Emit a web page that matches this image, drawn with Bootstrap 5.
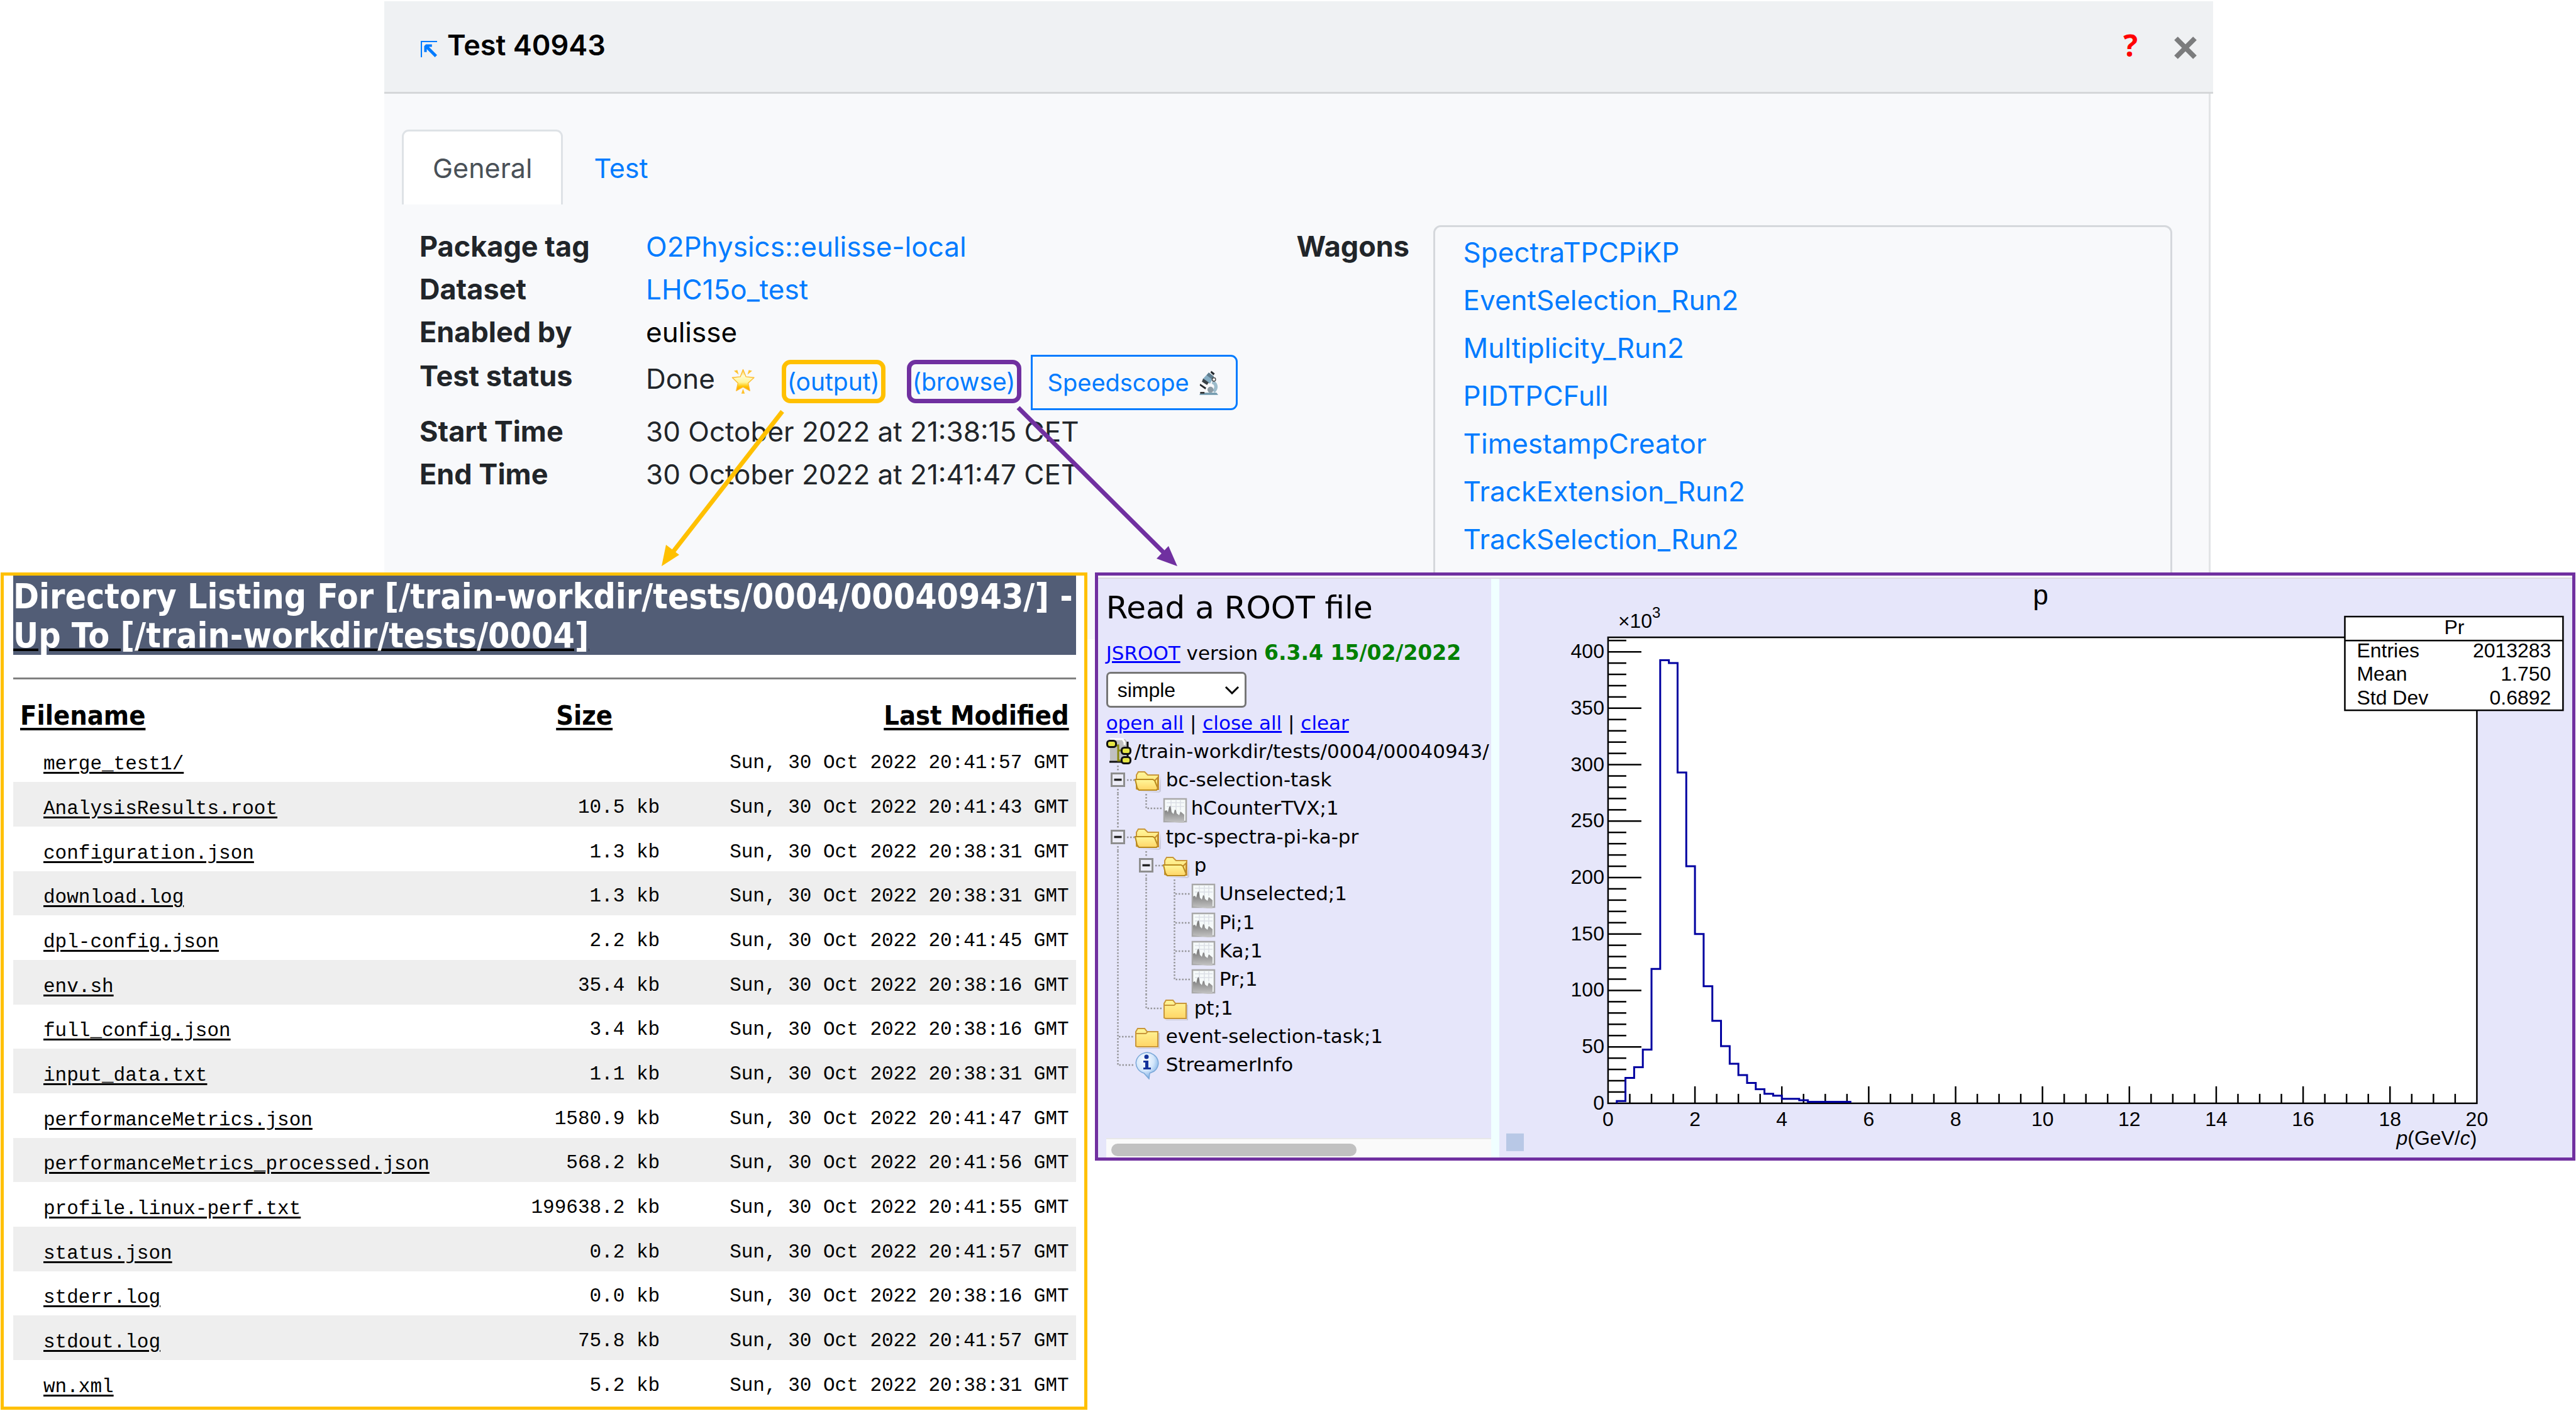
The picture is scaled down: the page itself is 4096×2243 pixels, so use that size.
<!DOCTYPE html>
<html lang="en">
<head>
<meta charset="utf-8">
<meta name="viewport" content="width=device-width, initial-scale=1">
<title>Test 40943</title>
<link href="https://cdn.jsdelivr.net/npm/bootstrap@5.3.0/dist/css/bootstrap.min.css" rel="stylesheet">
<style>
body{font-family:Inter,"Liberation Sans",sans-serif;font-size:44px;line-height:68px;color:#212529;background:#fff;overflow-x:hidden}
a{text-decoration:none}
/* test details sheet */
.sheet{width:71%;margin:2px 0 0 611px}
.sheet-head{background:#eff1f3;border-bottom:3px solid #d5d7d9;height:147px;padding:0 26px 0 58px}
.sheet-title{font-size:45px;line-height:68px;font-weight:600;color:#000;margin:0;padding-bottom:4px}
.pop-link svg{width:26px;height:26px;display:block;margin-top:8px}
.help-mark{font:700 48px/64px "Open Sans",sans-serif;color:#f00;padding-bottom:4px}
.close-x{border:0;background:none;padding:4px 0 0;line-height:0}
.sheet-body{background:#f8f9fb;border-right:3px solid #e2e4e6;margin-right:4px;padding:57px 0 58px}
.nav-tabs{border:0;margin:0 0 33px 28px}
.nav-tabs .nav-link{font-size:43px;border-width:3px;border-radius:11px 11px 0 0;padding:24px 46px 21px;margin:0;color:#007bff;height:119px}
.nav-tabs .nav-link.active{color:#495057;border-bottom:0;background:#fff}
.facts{padding-left:56px}
.fact-row dt{width:360px;font-size:45px;font-weight:700}
.fact-row a,.wagon-box a{color:#007bff}
.status-row{height:90px;padding-top:2px}
.status-text{padding-top:4px;margin-right:26px}
.fact-row .pill-link{font-size:39px;line-height:55px;border:7px solid #ffc000;border-radius:14px;padding:0 2px;margin-top:8px}
.fact-row .pill-browse{border-color:#7030a0;margin:8px 15px 0 34px}
.btn-scope{font-size:38px;line-height:60px;border:3px solid #007bff;border-radius:0 11px 11px 0;padding:0 28px 0 24px;height:88px;color:#007bff;gap:16px}
.star-icon{width:37px;height:40px;margin:22px 43px 0 0}
.wagon-label{width:217px;font-size:45px;font-weight:700}
.wagon-box{border:3px solid #d5d8dc;border-radius:12px;padding:2px 45px 60px;margin-right:58px;line-height:76px}
.arrows{left:0;top:0;pointer-events:none}
/* result panels */
.panels{margin-top:-106px;padding:0 1px;gap:12px;z-index:1}
.list-panel{border:5px solid #ffc000;background:#fff;padding:0 13px 3px 15px;width:42.2%;font-family:"DejaVu Sans Condensed","DejaVu Sans",sans-serif}
.list-title{background:#525d76;color:#fff;font-size:55px;line-height:62px;font-weight:700;margin:0;padding:2px 0 0}
.list-title a{color:#fff;text-decoration:underline;text-decoration-color:#000;text-decoration-thickness:4px}
.list-rule{border-top:3px solid #808080;opacity:1;margin:36px 0 0}
.files{table-layout:fixed;color:#000}
.files th{font-size:43px;line-height:52px;height:93px;padding:0 11px 10px;vertical-align:bottom}
.files th span{text-decoration:underline;text-decoration-thickness:4px;text-underline-offset:5px;text-decoration-skip-ink:none}
.files td{font:31px/40px "Liberation Mono",monospace;height:71px;padding:10px 11px 0;text-align:right;white-space:pre;vertical-align:middle}
.files tbody tr:nth-child(3n+1) td{height:70px}
.files tbody tr:nth-child(even) td{background:#eee}
.files tbody td:first-child{padding:14px 11px 0 48px;text-align:left}
.files a{color:#000;text-decoration:underline;text-decoration-thickness:3px;text-underline-offset:4px}
.root-panel{border:5px solid #7030a0;background:#e6e6fa;height:935px;color:#000;min-width:0;font-family:"DejaVu Sans",sans-serif}
.root-strip{height:5px;background:#fff;border-bottom:2px solid #d9dade}
.side{width:625px;flex:none;font-size:31px;line-height:45px}
.side-in{padding:11px 0 0 13px;overflow:hidden}
.side h2{font-size:50px;line-height:70px;font-weight:400;margin:0 0 14px}
.side .lk{color:#00f;text-decoration:underline;text-decoration-thickness:3px}
.version-no{color:green;font-size:33px;line-height:45px;font-weight:700}
.version-row{height:45px}
.mode-pick{width:223px;height:57px;border:3px solid #767676;border-radius:7px;font:32px/40px "Liberation Sans",sans-serif;color:#000;padding:0 15px;margin:8px 0 2px;background:#fff url("data:image/svg+xml,%3Csvg xmlns='http://www.w3.org/2000/svg' viewBox='0 0 24 14'%3E%3Cpath d='M2 2l10 10L22 2' fill='none' stroke='%23000' stroke-width='3'/%3E%3C/svg%3E") no-repeat right 8px center/24px 14px}
.tree{list-style:none;padding:0;margin:0}
.tree li{height:45px;white-space:nowrap}
.tree li:nth-child(3n){height:46px}
.tree svg{width:45px;height:46px;flex:none;overflow:visible}
.tree a{color:#000}
.tree .branch{padding-left:5px}
.splitter{width:13px;background:azure;flex:none}
.hbar{background:#fafafa;border-top:2px solid #e8e8e8;height:31px;margin-left:13px;padding:7px 8px 0}
.hbar div{height:20px;width:390px;border-radius:10px;background:#c1c1c1}
.plot{min-width:0}
.plot svg{width:100%;height:100%;display:block}
.plot text{font-family:"Liberation Sans",sans-serif;font-size:32px}
.plot .plot-title{font-size:44px}
.plot .plot-exp{font-size:24px}
</style>
</head>
<body>
<svg width="0" height="0" class="position-absolute" aria-hidden="true">
  <defs>
    <linearGradient id="gStar" x1="0" y1="0" x2="0" y2="1"><stop offset="0" stop-color="#ffc838"/><stop offset=".3" stop-color="#fffbd0"/><stop offset=".6" stop-color="#fff69a"/><stop offset=".8" stop-color="#ffc400"/><stop offset="1" stop-color="#ff9800"/></linearGradient>
    <linearGradient id="gFold" x1="0" y1="0" x2="0" y2="1"><stop offset="0" stop-color="#fff79a"/><stop offset="1" stop-color="#ffd566"/></linearGradient>
    <linearGradient id="gHist" x1="0" y1="0" x2="0" y2="1"><stop offset="0" stop-color="#6e6e6e"/><stop offset="1" stop-color="#c8c8c8"/></linearGradient>
    <radialGradient id="gInfo" cx=".4" cy=".3" r=".8"><stop offset="0" stop-color="#fff"/><stop offset=".5" stop-color="#d3e6fb"/><stop offset="1" stop-color="#5c9bdc"/></radialGradient>
    <symbol id="t-line" viewBox="0 0 45 46"><path d="M18.500 0V46" stroke="#97979b" stroke-width="2.500" stroke-dasharray="2.500 2.500"/></symbol>
    <symbol id="t-join" viewBox="0 0 45 46"><path d="M18.500 0V46M20 23H45" stroke="#97979b" stroke-width="2.500" stroke-dasharray="2.500 2.500"/></symbol>
    <symbol id="t-end" viewBox="0 0 45 46"><path d="M18.500 0V23H45" fill="none" stroke="#97979b" stroke-width="2.500" stroke-dasharray="2.500 2.500"/></symbol>
    <symbol id="t-minus" viewBox="0 0 45 46"><path d="M18.500 0V10M18.500 37V46M33 23H45" stroke="#97979b" stroke-width="2.500" stroke-dasharray="2.500 2.500"/><rect x="8.500" y="12.500" width="20" height="20" fill="#ececf6" stroke="#8e8e8e" stroke-width="3"/><path d="M12.500 22.500h12" stroke="#222" stroke-width="3.500"/></symbol>
    <symbol id="i-open" viewBox="0 0 45 46"><path d="M5 41h34l3-26v26l-3 2z" fill="#b9b9c8" opacity=".6"/><path d="M3 37V15l3-5h10l5 5h17v23H6z" fill="url(#gFold)" stroke="#c8963a" stroke-width="2"/><path d="M1 22h28l3 2 5 12-2 3H7l-3-4z" fill="url(#gFold)" stroke="#b98a1c" stroke-width="2"/><path d="M32 24l5-5v19" fill="none" stroke="#c08a2c" stroke-width="2"/></symbol>
    <symbol id="i-closed" viewBox="0 0 45 46"><path d="M4 41h34V17h2v25H6z" fill="#b9b9c8" opacity=".7"/><path d="M2 38V15l3-5h11l4 5h17v24H4z" fill="url(#gFold)" stroke="#c8963a" stroke-width="2"/><path d="M3 18h15l3-3" fill="none" stroke="#c8963a" stroke-width="2"/></symbol>
    <symbol id="i-hist" viewBox="0 0 45 46"><rect x="2" y="8" width="35" height="36" fill="#f6fafa" stroke="#a8a8a8" stroke-width="2.500"/><path d="M6 14h28M6 20h28M13 10v16M21 10v16M28 10v16" stroke="#dcdfe6" stroke-width="1.500"/><path d="M3 43V27l3-1 2 3 2-8 2-2 2 10 3 3 2-7 2 1 1 5 4 3 2-6 6 5v14z" fill="url(#gHist)"/></symbol>
    <symbol id="i-root" viewBox="0 0 45 46"><path d="M6 3h24l5 6v29H6z" fill="#c0c0c0"/><path d="M6 3h20l3 5v4" fill="none" stroke="#fff" stroke-width="3"/><path d="M34 7v31M5 39h28" stroke="#111" stroke-width="3"/><path d="M12 13h7v24h8M19 21h8" fill="none" stroke="#87870c" stroke-width="3"/><g fill="#e6e645" stroke="#111" stroke-width="3"><rect x="1.500" y="5.500" width="14" height="10" rx="4"/><rect x="24.500" y="16.500" width="14" height="10" rx="4"/><rect x="24.500" y="31.500" width="14" height="10" rx="4"/></g></symbol>
    <symbol id="i-info" viewBox="0 0 45 46"><path d="M20 3a19 17 0 0 1 11 30l-7 3-1 9-8-9A19 17 0 0 1 20 3z" fill="url(#gInfo)" stroke="#7aa7d8" stroke-width="1.500"/><circle cx="19" cy="10" r="3.500" fill="#15339b"/><path d="M14 16h8v11h4v3H14v-3h3v-8h-3z" fill="#15339b"/></symbol>
  </defs>
</svg>
<main>
<section class="sheet position-relative">
  <header class="sheet-head d-flex align-items-center justify-content-between">
    <div class="d-flex align-items-center gap-3">
      <a class="pop-link" href="#" aria-label="Open in page"><svg viewBox="0 0 38 38"><path d="M1.500 38V1.500H38" fill="none" stroke="#007bff" stroke-width="3"/><path d="M8 12l4-4h14v6h-7l19 19-5 5-19-19v7H8z" fill="#007bff"/></svg></a>
      <h1 class="sheet-title">Test 40943</h1>
    </div>
    <div class="d-flex align-items-center" style="gap:58px"><span class="help-mark">?</span>
      <button class="close-x" aria-label="Close"><svg width="36" height="36" viewBox="0 0 36 36"><path d="M3 3l30 30M33 3L3 33" stroke="#7b7c7d" stroke-width="8"/></svg></button></div>
  </header>
  <div class="sheet-body">
    <ul class="nav nav-tabs">
      <li class="nav-item"><a class="nav-link active" href="#">General</a></li>
      <li class="nav-item"><a class="nav-link" href="#">Test</a></li>
    </ul>
    <div class="row g-0">
      <dl class="col-6 facts mb-0">
        <div class="fact-row d-flex"><dt>Package tag</dt><dd class="mb-0"><a href="#">O2Physics::eulisse-local</a></dd></div>
        <div class="fact-row d-flex"><dt>Dataset</dt><dd class="mb-0"><a href="#">LHC15o_test</a></dd></div>
        <div class="fact-row d-flex"><dt>Enabled by</dt><dd class="mb-0 text-black">eulisse</dd></div>
        <div class="fact-row status-row d-flex"><dt>Test status</dt>
          <dd class="mb-0 d-flex align-items-start text-nowrap">
            <span class="status-text">Done</span>
            <svg class="star-icon" viewBox="0 0 55 59" aria-hidden="true"><path d="M27.500 2l7 17 19 2-14 13 4 18-16-9-16 9 4-18L2 21l19-2z" fill="url(#gStar)" stroke="#fdbb2d" stroke-width="2" stroke-linejoin="round"/><path d="M6 5l8-2 3 11zM49 5l-8-2-3 11zM27.500 47l4 12h-8z" fill="#ffc22e"/></svg>
            <a class="pill-link" href="#">(output)</a>
            <a class="pill-link pill-browse" href="#">(browse)</a>
            <button class="btn btn-scope d-flex align-items-center">Speedscope
              <svg width="30" height="40" viewBox="0 0 44 58" aria-hidden="true"><path d="M30 28c10 3 12 14 3 22" fill="none" stroke="#9dbccb" stroke-width="8"/><path d="M28 2l8 6-3 4-7-6zM2 32l14 9-2 4L1 36z" fill="#23282c"/><path d="M22 6l12 9-9 17-17-11z" fill="#86aec4"/><path d="M22 6l12 9-4 7L17 12z" fill="#5f7d8e"/><path d="M9 20l13 9-4 6-12-8z" fill="#3a4348"/><circle cx="34" cy="22" r="4" fill="#fff" stroke="#444" stroke-width="2"/><circle cx="26" cy="46" r="7" fill="#8b9aa3"/><path d="M0 58l3-5h37l4 5z" fill="#6f98ad"/><path d="M2 51h10v4H2z" fill="#333"/></svg></button>
          </dd></div>
        <div class="fact-row d-flex"><dt>Start Time</dt><dd class="mb-0">30 October 2022 at 21:38:15 CET</dd></div>
        <div class="fact-row d-flex"><dt>End Time</dt><dd class="mb-0">30 October 2022 at 21:41:47 CET</dd></div>
      </dl>
      <div class="col-6 d-flex">
        <div class="wagon-label">Wagons</div>
        <div class="wagon-box flex-fill">
          <a class="d-block" href="#">SpectraTPCPiKP</a>
          <a class="d-block" href="#">EventSelection_Run2</a>
          <a class="d-block" href="#">Multiplicity_Run2</a>
          <a class="d-block" href="#">PIDTPCFull</a>
          <a class="d-block" href="#">TimestampCreator</a>
          <a class="d-block" href="#">TrackExtension_Run2</a>
          <a class="d-block" href="#">TrackSelection_Run2</a>
        </div>
      </div>
    </div>
  </div>
  <svg class="arrows position-absolute" width="1400" height="906" viewBox="0 0 1400 906" aria-hidden="true">
    <path d="M633 652L457 878" stroke="#ffc000" stroke-width="7"/><path d="M441 898l7-34 21 16z" fill="#ffc000"/>
    <path d="M1008 646L1243 880" stroke="#7030a0" stroke-width="7"/><path d="M1261 898l-33-12 19-20z" fill="#7030a0"/>
  </svg>
</section>

<div class="panels d-flex align-items-start position-relative">
  <section class="list-panel flex-shrink-0">
    <h2 class="list-title">Directory Listing For [/train-workdir/tests/0004/00040943/] - <a href="#">Up To [/train-workdir/tests/0004]</a></h2>
    <hr class="list-rule">
    <table class="files w-100">
      <colgroup><col style="width:46%"><col style="width:15.500%"><col></colgroup>
      <thead><tr><th class="text-start"><span>Filename</span></th><th class="text-center"><span>Size</span></th><th class="text-end"><span>Last Modified</span></th></tr></thead>
      <tbody>
        <tr><td><a href="#">merge_test1/</a></td><td></td><td>Sun, 30 Oct 2022 20:41:57 GMT</td></tr>
        <tr><td><a href="#">AnalysisResults.root</a></td><td>10.5 kb</td><td>Sun, 30 Oct 2022 20:41:43 GMT</td></tr>
        <tr><td><a href="#">configuration.json</a></td><td>1.3 kb</td><td>Sun, 30 Oct 2022 20:38:31 GMT</td></tr>
        <tr><td><a href="#">download.log</a></td><td>1.3 kb</td><td>Sun, 30 Oct 2022 20:38:31 GMT</td></tr>
        <tr><td><a href="#">dpl-config.json</a></td><td>2.2 kb</td><td>Sun, 30 Oct 2022 20:41:45 GMT</td></tr>
        <tr><td><a href="#">env.sh</a></td><td>35.4 kb</td><td>Sun, 30 Oct 2022 20:38:16 GMT</td></tr>
        <tr><td><a href="#">full_config.json</a></td><td>3.4 kb</td><td>Sun, 30 Oct 2022 20:38:16 GMT</td></tr>
        <tr><td><a href="#">input_data.txt</a></td><td>1.1 kb</td><td>Sun, 30 Oct 2022 20:38:31 GMT</td></tr>
        <tr><td><a href="#">performanceMetrics.json</a></td><td>1580.9 kb</td><td>Sun, 30 Oct 2022 20:41:47 GMT</td></tr>
        <tr><td><a href="#">performanceMetrics_processed.json</a></td><td>568.2 kb</td><td>Sun, 30 Oct 2022 20:41:56 GMT</td></tr>
        <tr><td><a href="#">profile.linux-perf.txt</a></td><td>199638.2 kb</td><td>Sun, 30 Oct 2022 20:41:55 GMT</td></tr>
        <tr><td><a href="#">status.json</a></td><td>0.2 kb</td><td>Sun, 30 Oct 2022 20:41:57 GMT</td></tr>
        <tr><td><a href="#">stderr.log</a></td><td>0.0 kb</td><td>Sun, 30 Oct 2022 20:38:16 GMT</td></tr>
        <tr><td><a href="#">stdout.log</a></td><td>75.8 kb</td><td>Sun, 30 Oct 2022 20:41:57 GMT</td></tr>
        <tr><td><a href="#">wn.xml</a></td><td>5.2 kb</td><td>Sun, 30 Oct 2022 20:38:31 GMT</td></tr>
      </tbody>
    </table>
  </section>

  <section class="root-panel flex-fill d-flex flex-column">
    <div class="root-strip"></div>
    <div class="d-flex flex-fill" style="min-height:0">
      <div class="side d-flex flex-column">
        <div class="side-in flex-fill">
          <h2>Read a ROOT file</h2>
          <div class="version-row text-nowrap"><a class="lk" href="#">JSROOT</a> version <span class="version-no">6.3.4 15/02/2022</span></div>
          <select class="mode-pick form-select" aria-label="Display mode"><option>simple</option></select>
          <div><a class="lk" href="#">open all</a> | <a class="lk" href="#">close all</a> | <a class="lk" href="#">clear</a></div>
          <ul class="tree">
            <li class="d-flex"><svg><use href="#i-root"/></svg><a href="#">/train-workdir/tests/0004/00040943/</a></li>
            <li class="d-flex"><svg><use href="#t-minus"/></svg><svg><use href="#i-open"/></svg><a class="branch" href="#">bc-selection-task</a></li>
            <li class="d-flex"><svg><use href="#t-line"/></svg><svg><use href="#t-end"/></svg><svg><use href="#i-hist"/></svg><a href="#">hCounterTVX;1</a></li>
            <li class="d-flex"><svg><use href="#t-minus"/></svg><svg><use href="#i-open"/></svg><a class="branch" href="#">tpc-spectra-pi-ka-pr</a></li>
            <li class="d-flex"><svg><use href="#t-line"/></svg><svg><use href="#t-minus"/></svg><svg><use href="#i-open"/></svg><a class="branch" href="#">p</a></li>
            <li class="d-flex"><svg><use href="#t-line"/></svg><svg><use href="#t-line"/></svg><svg><use href="#t-join"/></svg><svg><use href="#i-hist"/></svg><a href="#">Unselected;1</a></li>
            <li class="d-flex"><svg><use href="#t-line"/></svg><svg><use href="#t-line"/></svg><svg><use href="#t-join"/></svg><svg><use href="#i-hist"/></svg><a href="#">Pi;1</a></li>
            <li class="d-flex"><svg><use href="#t-line"/></svg><svg><use href="#t-line"/></svg><svg><use href="#t-join"/></svg><svg><use href="#i-hist"/></svg><a href="#">Ka;1</a></li>
            <li class="d-flex"><svg><use href="#t-line"/></svg><svg><use href="#t-line"/></svg><svg><use href="#t-end"/></svg><svg><use href="#i-hist"/></svg><a href="#">Pr;1</a></li>
            <li class="d-flex"><svg><use href="#t-line"/></svg><svg><use href="#t-end"/></svg><svg><use href="#i-closed"/></svg><a class="branch" href="#">pt;1</a></li>
            <li class="d-flex"><svg><use href="#t-join"/></svg><svg><use href="#i-closed"/></svg><a class="branch" href="#">event-selection-task;1</a></li>
            <li class="d-flex"><svg><use href="#t-end"/></svg><svg><use href="#i-info"/></svg><a class="branch" href="#">StreamerInfo</a></li>
          </ul>
        </div>
        <div class="hbar"><div></div></div>
      </div>
      <div class="splitter"></div>
      <div class="plot flex-fill">
        <svg viewBox="0 0 1707 920" role="img" aria-label="Histogram of p">
          <rect x="11" y="882" width="28" height="28" fill="#b8c8e6"/>
          <rect x="173" y="93" width="1382" height="741" fill="#fff" stroke="#000" stroke-width="2.500"/>
          <g id="axes" stroke="#000" stroke-width="2.500"></g>
          <path id="hist" fill="none" stroke="#0000a0" stroke-width="3"/>
          <g id="labels"></g>
          <text x="189" y="78">×10</text><text class="plot-exp" x="243" y="62">3</text>
          <text class="plot-title" x="861" y="41" text-anchor="middle">p</text>
          <text x="1555" y="900" text-anchor="end"><tspan font-style="italic">p</tspan>(GeV/<tspan font-style="italic">c</tspan>)</text>
          <rect x="1345" y="60" width="347" height="149" fill="#fff" stroke="#000" stroke-width="2.500"/>
          <path d="M1345 98H1692" stroke="#000" stroke-width="2.500"/>
          <text x="1519" y="88" text-anchor="middle">Pr</text>
          <text x="1364" y="125">Entries</text><text x="1673" y="125" text-anchor="end">2013283</text>
          <text x="1364" y="162">Mean</text><text x="1673" y="162" text-anchor="end">1.750</text>
          <text x="1364" y="200">Std Dev</text><text x="1673" y="200" text-anchor="end">0.6892</text>
        </svg>
      </div>
    </div>
  </section>
</div>
</main>
<script>
// histogram: x runs 0..20 GeV/c, y is in thousands of entries
const X = v => 173 + v * 69.1, Y = v => 834 - v * 1.795;
const bins = [0, 2, 22.5, 32, 47.6, 119, 392.6, 390, 293, 210, 150, 103.7, 73, 50.7, 35, 25, 18, 12.4, 8.4, 6.7, 4, 4, 2.7, 1.3, 1.3, 1.3, 1.3, 1.3];
let axes = '', labels = '', d = `M${X(0.2)} ${Y(0)}`;
for (let v = 10; v <= 410; v += 10) axes += `<path d="M173 ${Y(v)}h${v % 50 ? 29 : 53}"/>`;
for (let v = 0; v <= 400; v += 50) labels += `<text x="167" y="${Y(v) + 10}" text-anchor="end">${v}</text>`;
for (let i = 1; i < 40; i++) axes += `<path d="M${X(i / 2)} 834v${i % 4 ? -15 : -27}"/>`;
for (let v = 0; v <= 20; v += 2) labels += `<text x="${X(v)}" y="870" text-anchor="middle">${v}</text>`;
bins.forEach((b, i) => { if (i) d += `V${Y(b)}H${X((i + 1) * 0.2)}`; });
document.getElementById('axes').innerHTML = axes;
document.getElementById('labels').innerHTML = labels;
document.getElementById('hist').setAttribute('d', d);
</script>
<script src="https://cdn.jsdelivr.net/npm/bootstrap@5.3.0/dist/js/bootstrap.bundle.min.js"></script>
</body>
</html>
